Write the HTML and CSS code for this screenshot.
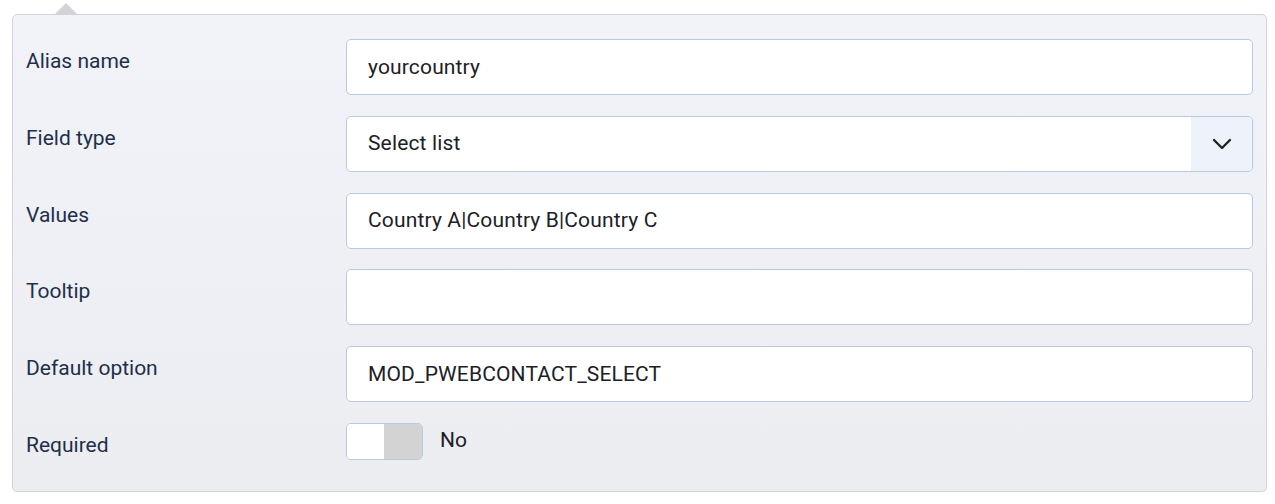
FILE: index.html
```html
<!DOCTYPE html>
<html>
<head>
<meta charset="utf-8">
<link rel="stylesheet" href="styles.css">
</head>
<body>
<div class="wrap">
  <div class="arrow"></div>
  <div class="panel">
    <div class="row">
      <div class="label">Alias name</div>
      <div class="control"><div class="input">yourcountry</div></div>
    </div>
    <div class="row">
      <div class="label">Field type</div>
      <div class="control">
        <div class="input select">
          <span class="sel-text">Select list</span>
          <span class="sel-btn"><svg width="20" height="12" viewBox="0 0 20 12"><path d="M2 2 L10 10 L18 2" fill="none" stroke="#222" stroke-width="2.4" stroke-linecap="round" stroke-linejoin="round"/></svg></span>
        </div>
      </div>
    </div>
    <div class="row">
      <div class="label">Values</div>
      <div class="control"><div class="input">Country A|Country B|Country C</div></div>
    </div>
    <div class="row">
      <div class="label">Tooltip</div>
      <div class="control"><div class="input"></div></div>
    </div>
    <div class="row">
      <div class="label">Default option</div>
      <div class="control"><div class="input">MOD_PWEBCONTACT_SELECT</div></div>
    </div>
    <div class="row last">
      <div class="label">Required</div>
      <div class="control toggle-row">
        <div class="toggle"><span class="t-on"></span><span class="t-off"></span></div>
        <span class="t-label">No</span>
      </div>
    </div>
  </div>
</div>
</body>
</html>
```
FILE: styles.css
```css
* { box-sizing: border-box; }
html, body { margin: 0; padding: 0; background: #fff; }
body { font-family: Roboto, "Liberation Sans", sans-serif; }
.wrap { position: relative; padding: 14px 8px 0 12px; width: 1275px; }
.arrow {
  position: absolute; left: 55px; top: 3px;
  width: 0; height: 0;
  border-left: 11px solid transparent;
  border-right: 11px solid transparent;
  border-bottom: 11px solid #d2d3d6;
}
.panel {
  width: 1255px;
  height: 478px;
  border: 1px solid #d3d4d7;
  border-radius: 5px;
  background: linear-gradient(#f1f3f8, #ecedf1);
  padding: 24px 13px 0 13px;
  box-shadow: 0 1px 1px rgba(0,0,0,0.04);
}
.row { display: flex; height: 76.75px; }
.label {
  width: 320px;
  padding-top: 10px;
  font-size: 21px;
  color: #1e2f4c;
  line-height: 24px;
}
.control { flex: 1; }
.input {
  height: 56px;
  border: 1px solid #b9c8e3;
  border-radius: 5px;
  background: #fff;
  padding: 0 21px 1px 21px;
  font-size: 21px;
  letter-spacing: 0.15px;
  color: #1c2026;
  display: flex;
  align-items: center;
}
.select { padding-right: 0; padding-bottom: 0; overflow: hidden; }
.sel-text { flex: 1; padding-bottom: 1px; }
.sel-btn {
  width: 61px; height: 100%;
  background: #eef3fb;
  display: flex; align-items: center; justify-content: center;
}
.toggle-row { display: flex; align-items: flex-start; }
.toggle {
  display: flex;
  width: 77px; height: 37px;
  border: 1px solid #b9c8e3;
  border-radius: 5px;
  overflow: hidden;
}
.t-on { width: 37px; background: #fff; }
.t-off { flex: 1; background: #d3d3d3; }
.t-label { margin-left: 17px; font-size: 21px; color: #1c2026; line-height: 34px; }
```
